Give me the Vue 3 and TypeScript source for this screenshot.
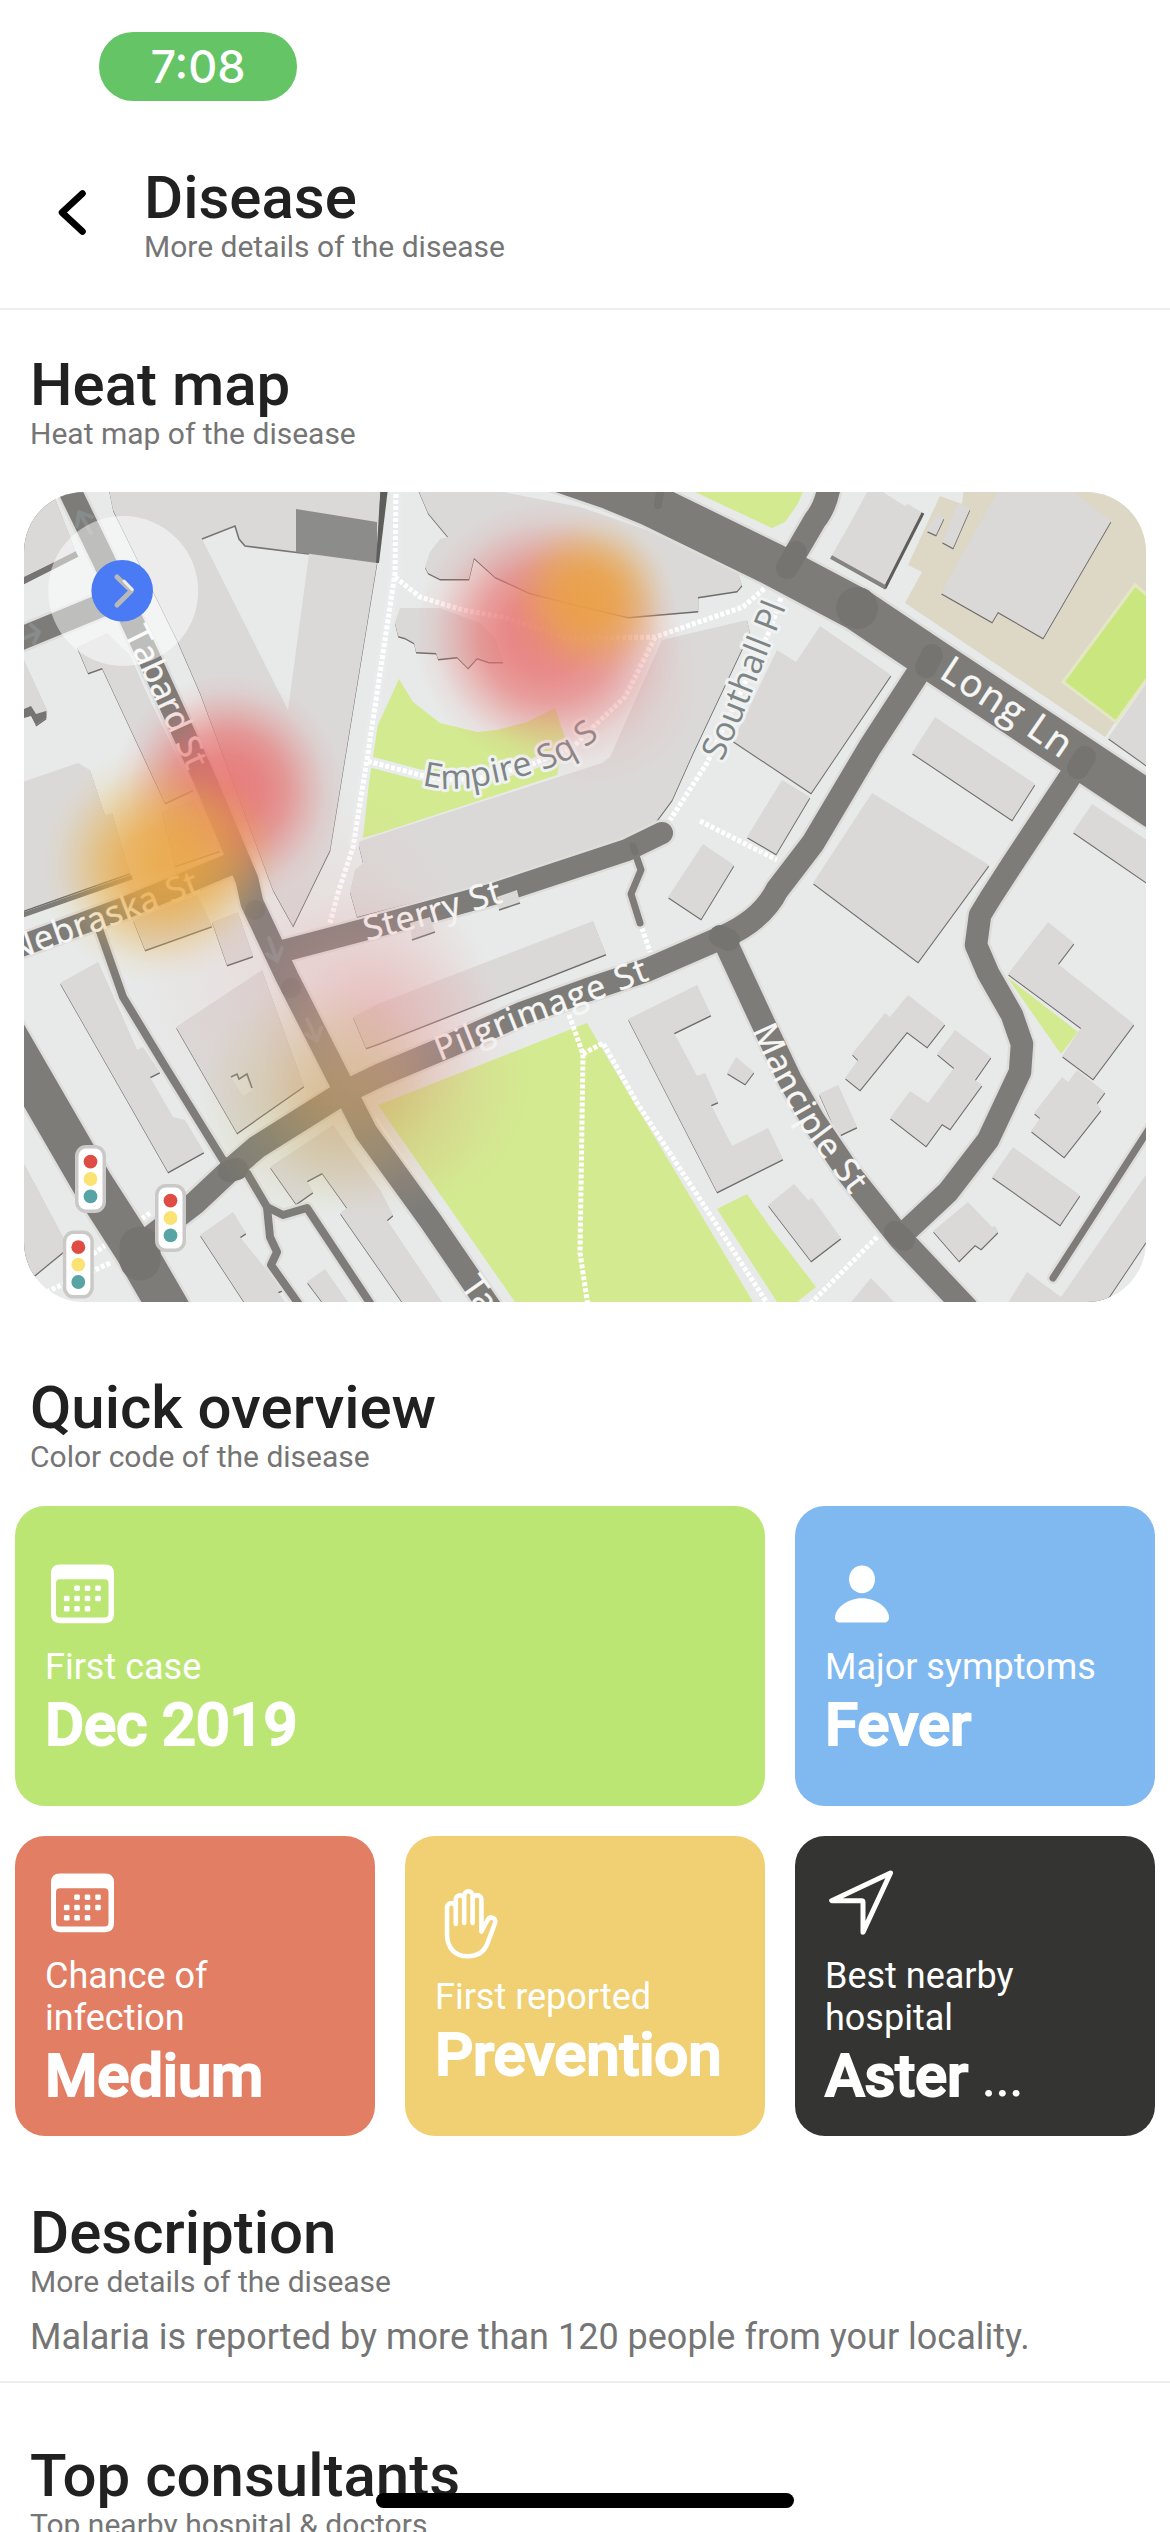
<script setup lang="ts">
type IconName = 'calendar' | 'person' | 'hand' | 'navigate'

interface Tile {
  icon: IconName
  label: string
  value: string
  more?: boolean
  color: string
  wide?: boolean
}

interface Road {
  d: string
  w: number
}

interface Label {
  id: string
  d: string
  text: string
  len: number
  size: number
  plain?: boolean
}

const tiles: Tile[] = [
  { icon: 'calendar', label: 'First case', value: 'Dec 2019', color: '#bbe673', wide: true },
  { icon: 'person', label: 'Major symptoms', value: 'Fever', color: '#7fb9f0' },
  { icon: 'calendar', label: 'Chance of infection', value: 'Medium', color: '#e27e64' },
  { icon: 'hand', label: 'First reported', value: 'Prevention', color: '#f0d072' },
  { icon: 'navigate', label: 'Best nearby hospital', value: 'Aster', more: true, color: '#343532' },
]

const calendarDots: number[][] = [
  [32, 36.2], [42.5, 36.2], [53, 36.2],
  [21.7, 46.5], [32, 46.5], [42.5, 46.5], [53, 46.5],
  [21.7, 56.8], [32, 56.8], [42.5, 56.8],
]

const parks: string[] = [
  '399,679 413,702 440,723 477,732 497,730 527,722 555,708 565,738 557,775 380,833 363,838 370,773 372,753 377,727',
  '587,1023 598,1042 753,1302 515,1302 378,1105',
  '747,1194 717,1209 777,1302 797,1302 816,1287 770,1227',
  '1007,977 1078,1032 1061,1054',
  '695,492 772,528 785,522 797,505 803,492',
]

const buildings: string[] = [
  '867,492 883,492 905,506 908,504 923,513 885,588 831,557 852,520',
  '998,492 1072,492 1111,521 1043,638 998,612 992,622 941,593 983,518',
  '937,513 944,518 936,535 927,531',
  '958,503 970,509 953,548 942,542',
  '820,626 891,675 811,793 733,741 777,650 796,662',
  '782,780 810,797 776,854 747,837',
  '935,717 1035,784 1012,820 912,753',
  '872,793 989,865 918,962 813,883',
  '1092,804 1150,842 1150,885 1073,832',
  '1150,678 1108,738 1150,768',
  '703,844 734,865 701,919 668,897',
  '662,640 747,620 750,632 693,753 672,800 652,827 620,843 513,877 357,917 350,892 355,870 363,863 358,842 400,828 602,763 610,757',
  '414,480 503,492 580,507 647,530 738,573 742,585 737,591 698,597 698,611 628,617 577,605 530,593 495,577 474,558 469,579 440,579 428,573 425,567 430,552 440,539 448,537 428,513',
  '400,608 440,608 480,623 495,638 503,662 489,662 477,658 468,668 457,657 438,659 436,653 416,652 414,643 405,638 398,636 395,623',
  '107,480 381,480 377,563 330,850 293,926 273,890 200,693 177,640 113,510',
  '20,480 48,480 76,552 24,577',
  '77,647 107,633 130,655 145,690 193,790 165,803 102,668 88,673',
  '20,783 78,763 90,770 105,815 112,813 130,873 20,912',
  '20,655 24,660 47,710 46,718 36,725 31,714 20,716',
  '162,812 193,800 222,850 175,866',
  '133,920 197,895 212,926 145,950',
  '212,922 238,912 253,956 227,965',
  '98,962 137,1050 143,1047 160,1072 150,1077 173,1117 185,1120 204,1152 168,1172 60,983',
  '262,970 304,1086 237,1133 176,1027',
  '333,1125 380,1190 393,1215 387,1220 442,1302 402,1302 340,1213 347,1208 322,1173 307,1181 313,1192 296,1204 270,1167',
  '233,1212 246,1233 240,1237 283,1290 278,1292 285,1302 244,1302 200,1235',
  '325,1269 348,1302 322,1302 307,1282',
  '20,1156 63,1237 63,1252 35,1275 20,1278',
  '353,1017 380,1003 593,921 606,954 380,1043 366,1048',
  '697,985 711,1015 674,1033 697,1076 705,1073 718,1102 711,1105 732,1146 768,1128 783,1159 717,1192 628,1019',
  '736,1057 754,1072 745,1084 727,1073',
  '794,1184 808,1200 812,1198 841,1238 811,1261 768,1205',
  '838,1085 857,1127 838,1136 819,1094',
  '908,995 945,1024 927,1047 907,1032 860,1090 845,1078 858,1060 852,1054 885,1013 890,1017',
  '955,1030 991,1057 975,1080 982,1085 950,1129 942,1124 926,1146 890,1118 910,1091 928,1103 954,1068 937,1054',
  '1048,922 1074,943 1058,964 1134,1024 1093,1079 1062,1056 1081,1028 1008,974',
  '1077,1070 1105,1092 1097,1103 1101,1110 1064,1157 1031,1131 1040,1118 1034,1113 1062,1077 1068,1082',
  '1013,1147 1080,1195 1060,1225 992,1177',
  '968,1202 992,1227 995,1226 998,1232 981,1249 975,1245 959,1261 933,1231',
  '1150,1169 1150,1236 1103,1306 1006,1306 1027,1272 1061,1297',
  '871,1278 898,1306 848,1306',
]

const roadBits: string[] = [
  '410,923 430,917 435,932 412,940',
  '497,897 517,890 520,903 499,910',
]

const roads: Road[] = [
  { d: 'M40 425L68 487L103 559L150 660L205 780L247 880L252 903L287 977L343 1087L366 1132L385 1158L430 1220L495 1315', w: 23 },
  { d: 'M10 643L112 601', w: 23 },
  { d: 'M10 950L127 907L238 861', w: 22 },
  { d: 'M0 1024L92 1183L135 1250L172 1314', w: 41 },
  { d: 'M143 1243L195 1203L228 1172L257 1147L343 1093L380 1075L447 1047L523 1013L587 990L647 970L723 937Q762 920 777 890L813 843L870 747L920 670L933 653', w: 23.5 },
  { d: 'M283 951L363 930L497 893L527 883L627 850L662 833', w: 22 },
  { d: 'M633 847L641 870L631 894L640 923', w: 7 },
  { d: 'M540 464L610 488L651 505L772 564L857 609L930 658L1040 731L1156 808', w: 43 },
  { d: 'M834 470L828 492Q824 509 815 520L787 568', w: 23 },
  { d: 'M1085 757L1070 777L1013 863L991 897L980 915L976 945L988 973L1012 1015L1022 1044L1020 1072L988 1140L948 1192L902 1235', w: 22.5 },
  { d: 'M723 937L763 1023L790 1080L813 1120L850 1175L900 1238L966 1308', w: 24 },
  { d: 'M1156 1118L1053 1278', w: 7 },
  { d: 'M97 923L123 997L163 1063L223 1160L247 1173L267 1207L283 1215L307 1208L376 1312', w: 8 },
  { d: 'M267 1207L270 1237L277 1252L271 1265L303 1310', w: 8 },
]

// Round overlaps where one street ends on top of another
const junctions: Road[] = [
  { d: 'M140 1247V1260', w: 41 },
  { d: 'M229 1171L237 1169', w: 22 },
  { d: 'M720 936L729 940', w: 22 },
  { d: 'M926 667L932 655', w: 22 },
  { d: 'M1078 768L1085 757', w: 22 },
  { d: 'M787 568L796 552', w: 22 },
  { d: 'M895 1232L904 1240', w: 22 },
  { d: 'M857 608h.1', w: 42 },
  { d: 'M660 492L658 505', w: 8 },
  { d: 'M255 910h.1', w: 20 },
  { d: 'M291 988h.1', w: 20 },
  { d: 'M633 846L635 852', w: 7 },
]

const footpaths: string[] = [
  'M396 488L395 573L367 760L353 847L338 893L330 923',
  'M395 577L420 597L463 610L507 618L565 638L607 638L655 637L743 607L765 588',
  'M655 637L625 697L593 727L573 747L530 765L480 778L447 780L420 775L367 761',
  'M781 598L770 630L707 763L670 820',
  'M700 821L777 860',
  'M642 928L650 952',
  'M569 1015L583 1054L580 1253L588 1306',
  'M583 1054L603 1043L637 1103L707 1210L769 1306',
  'M877 1237L808 1306',
  'M110 1263L44 1293',
  'M150 1213L93 1254',
]

const labels: Label[] = [
  { id: 'tabard', d: 'M124 633L129 643L196 789', text: 'Tabard St', len: 152, size: 34 },
  { id: 'nebraska', d: 'M13 961L110 927L222 884', text: 'Nebraska St', len: 200, size: 34 },
  { id: 'sterry', d: 'M367 941L435 923L520 897', text: 'Sterry St', len: 142, size: 34 },
  { id: 'pilgrimage', d: 'M440 1061L525 1027L665 974', text: 'Pilgrimage St', len: 225, size: 34 },
  { id: 'manciple', d: 'M752 1030L777 1085L805 1134L862 1210', text: 'Manciple St', len: 193, size: 34 },
  { id: 'long', d: 'M938 677L1000 717L1080 772', text: 'Long Ln', len: 148, size: 38 },
  { id: 'tabard-south', d: 'M460 1286L482 1317L532 1388', text: 'Tabard St', len: 140, size: 34 },
  { id: 'empire', d: 'M422 785Q452 793 490 784Q545 773 573 757L620 722', text: 'Empire Sq S', len: 190, size: 34, plain: true },
  { id: 'southall', d: 'M722 762L741 720L794 587', text: 'Southall Pl', len: 168, size: 34, plain: true },
]

const arrows: string[] = [
  'M91 533L80 513M77 526L79 512L92 517',
  'M22 639L39 632M31 625L39 632L34 643',
  'M269 938L277 960M267 954L277 961L282 948',
  'M307 1019L317 1041M306 1034L317 1041L321 1028',
]

const lights: number[][] = [
  [90.5, 1179],
  [170.5, 1218],
  [78.3, 1264.6],
]
</script>

<template>
  <main class="screen">
    <div class="status">
      <span class="clock">7:08</span>
    </div>

    <header class="topbar">
      <svg class="back" width="48" height="60" viewBox="48 182 48 60" aria-hidden="true">
        <path d="M82.5 193.5L62 212.5L82.5 231.5" />
      </svg>
      <div class="heading">
        <h1>Disease</h1>
        <p>More details of the disease</p>
      </div>
    </header>

    <section class="heading block first">
      <h2>Heat map</h2>
      <p>Heat map of the disease</p>
    </section>

    <div class="map">
      <svg width="1122" height="810" viewBox="24 492 1122 810">
        <defs>
          <radialGradient id="red">
            <stop offset="0" stop-color="#e8706e" stop-opacity=".88" />
            <stop offset=".3" stop-color="#e8706e" stop-opacity=".8" />
            <stop offset=".5" stop-color="#e8706e" stop-opacity=".62" />
            <stop offset=".7" stop-color="#e8706e" stop-opacity=".3" />
            <stop offset=".85" stop-color="#e8706e" stop-opacity=".09" />
            <stop offset="1" stop-color="#e8706e" stop-opacity="0" />
          </radialGradient>
          <radialGradient id="orange">
            <stop offset="0" stop-color="#eba540" stop-opacity=".86" />
            <stop offset=".3" stop-color="#eba640" stop-opacity=".76" />
            <stop offset=".5" stop-color="#eaab40" stop-opacity=".54" />
            <stop offset=".7" stop-color="#e9ae40" stop-opacity=".26" />
            <stop offset=".85" stop-color="#e9b040" stop-opacity=".08" />
            <stop offset="1" stop-color="#e9b040" stop-opacity="0" />
          </radialGradient>
          <radialGradient id="rose">
            <stop offset="0" stop-color="#e89090" stop-opacity=".36" />
            <stop offset=".5" stop-color="#e89c9c" stop-opacity=".2" />
            <stop offset="1" stop-color="#e8a0a0" stop-opacity="0" />
          </radialGradient>
          <radialGradient id="amber">
            <stop offset="0" stop-color="#cb9c4a" stop-opacity=".38" />
            <stop offset=".45" stop-color="#c4aa54" stop-opacity=".24" />
            <stop offset="1" stop-color="#c0b45e" stop-opacity="0" />
          </radialGradient>
          <path v-for="l in labels" :id="l.id" :key="l.id" :d="l.d" />
        </defs>

        <rect x="24" y="492" width="1122" height="810" fill="#e7eae9" />
        <polygon fill="#ddd7c6" points="965,480 1150,480 1150,670 1105,737 905,603 922,572 908,565 940,496 962,504" />
        <polygon v-for="(p, i) in parks" :key="'p' + i" :points="p" fill="#d3ea90" />
        <polygon fill="#c9e77e" stroke="#e4e7c4" stroke-width="3" points="1135,585 1152,599 1152,672 1116,722 1063,682" />

        <g fill="#6e6d6b" transform="translate(.2 1.4)">
          <polygon v-for="(p, i) in buildings" :key="'s' + i" :points="p" />
        </g>
        <g fill="#dbd9d8">
          <polygon v-for="(p, i) in buildings" :key="'b' + i" :points="p" />
        </g>

        <polygon fill="#e7eae9" points="202,539 235,526 239,539 245,546 309,554 288,710" />
        <path class="edge" d="M202 539L235 526L239 539L245 546L309 554" />
        <polygon fill="#8c8c8a" points="296,509 377,522 377,563 296,552" />
        <polygon fill="#5d5d5c" points="381,480 389,480 379,563 376,563" />
        <polygon fill="#e3e2e1" points="231,1077 245,1075 253,1090 243,1096" />
        <path class="edge" d="M231 1077L237 1074L239 1079L247 1074L252 1088" />
        <path d="M20 583L77 554" stroke="#757472" stroke-width="6" />
        <path d="M20 916L132 877" stroke="#7d7c79" stroke-width="5" />
        <path d="M24 709L31 706L36 714L46 711V718L36 725L31 716L24 718Z" fill="#757472" />
        <path d="M923 513L885 588" stroke="#5d5d5c" stroke-width="3" />
        <path d="M831 557L885 587" stroke="#858482" stroke-width="4" />

        <g fill="none" stroke="#e9ecec" stroke-width="11">
          <path d="M367 761L420 775L447 780L480 778L530 765L573 747L593 727" />
          <path d="M396 488L395 573L367 760L353 847" />
        </g>
        <g class="footpaths">
          <path v-for="(d, i) in footpaths" :key="'f' + i" :d="d" />
        </g>
        <path d="M376 1118L430 1200L480 1278" fill="none" stroke="#f3f2f1" stroke-width="2.5" />

        <g class="casing">
          <path v-for="(r, i) in roads" :key="'c' + i" :d="r.d" :stroke-width="r.w + 5" />
        </g>
        <g class="roads">
          <path v-for="(r, i) in roads" :key="'r' + i" :d="r.d" :stroke-width="r.w" />
        </g>
        <g class="junctions">
          <path v-for="(r, i) in junctions" :key="'j' + i" :d="r.d" :stroke-width="r.w" />
        </g>
        <g class="arrows">
          <path v-for="(d, i) in arrows" :key="'a' + i" :d="d" />
        </g>
        <g fill="#dbd9d8">
          <polygon v-for="(p, i) in roadBits" :key="'rb' + i" :points="p" />
        </g>
        <path class="edge" d="M412 940L435 932M499 910L520 903" />

        <text
          v-for="l in labels"
          :key="'t' + l.id"
          :class="['street', { plain: l.plain }]"
          :font-size="l.size"
        >
          <textPath :href="'#' + l.id" :textLength="l.len">{{ l.text }}</textPath>
        </text>

        <g>
          <circle cx="300" cy="960" r="180" fill="url(#rose)" opacity=".5" />
          <circle cx="375" cy="1010" r="125" fill="url(#rose)" />
          <circle cx="395" cy="1080" r="135" fill="url(#rose)" opacity=".75" />
          <circle cx="315" cy="1100" r="118" fill="url(#amber)" />
          <circle cx="375" cy="1110" r="110" fill="url(#amber)" opacity=".55" />
          <circle cx="228" cy="790" r="116" fill="url(#red)" />
          <circle cx="158" cy="865" r="118" fill="url(#orange)" />
          <circle cx="205" cy="855" r="85" fill="url(#orange)" opacity=".35" />
          <circle cx="547" cy="634" r="134" fill="url(#red)" />
          <circle cx="595" cy="680" r="110" fill="url(#rose)" opacity=".8" />
          <circle cx="590" cy="597" r="86" fill="url(#orange)" />
        </g>

        <g v-for="(l, i) in lights" :key="'l' + i" :transform="`translate(${l[0]} ${l[1]})`">
          <rect x="-15.5" y="-34" width="31" height="68" rx="11" fill="#cbc9c8" />
          <rect x="-12" y="-30.5" width="24" height="61" rx="7.5" fill="#fff" />
          <circle cy="-17.4" r="6.9" fill="#df4c43" />
          <circle r="6.9" fill="#fae273" />
          <circle cy="17.4" r="6.9" fill="#58a3a4" />
        </g>

        <circle cx="123.2" cy="591" r="75" fill="#fff" fill-opacity=".5" />
        <circle cx="122.2" cy="590.7" r="30.8" fill="#4a7af4" />
        <path d="M117 577L131.3 590.7L117 605" fill="none" stroke="#b9b9b8" stroke-width="5" stroke-linecap="round" stroke-linejoin="round" />
        <path d="M124 581L132.3 589.5" fill="none" stroke="#eee" stroke-width="3" stroke-linecap="round" />
      </svg>
    </div>

    <section class="heading block overview">
      <h2>Quick overview</h2>
      <p>Color code of the disease</p>
    </section>

    <div class="tiles">
      <article
        v-for="t in tiles"
        :key="t.label"
        :class="['tile', { wide: t.wide }]"
        :style="{ backgroundColor: t.color }"
      >
        <svg class="icon" width="75" height="94" viewBox="0 0 75 94" aria-hidden="true">
          <template v-if="t.icon === 'calendar'">
            <path
              fill="#fff"
              fill-rule="evenodd"
              d="M15 12.5H60Q69 12.5 69 21.5V62Q69 71.2 60 71.2H15Q6 71.2 6 62V21.5Q6 12.5 15 12.5ZM15 27.2Q11 27.2 11 31V61.5Q11 65.5 15 65.5H59.5Q63.5 65.5 63.5 61.5V31Q63.5 27.2 59.5 27.2Z"
            />
            <rect
              v-for="(c, i) in calendarDots"
              :key="i"
              :x="c[0] - 2.8"
              :y="c[1] - 2.8"
              width="5.6"
              height="5.6"
              rx="1.4"
              fill="#fff"
            />
          </template>
          <g v-else-if="t.icon === 'person'" fill="#fff">
            <path d="M37 13.5C44.5 13.5 50 19.5 50 27.5C50 35 44.3 41.2 37 41.2S24 35 24 27.5C24 19.5 29.5 13.5 37 13.5Z" />
            <path d="M37 46.2C52 46.2 64 56.5 64 65.5C64 69 62 70.5 59 70.5H15C12 70.5 10 69 10 65.5C10 56.5 22 46.2 37 46.2Z" />
          </g>
          <path
            v-else-if="t.icon === 'hand'"
            class="line hand"
            d="M20.8 42V25.5a4.4 4.4 0 0 0-8.8 0V52C12 66.5 20.5 74.2 32.7 74.2C43.5 74.2 50 69 53 60L60 41C61.8 36 55.3 33 52.3 38.5L46.4 49.5V17.5a4.4 4.4 0 0 0-8.8 0V41M20.8 26V17.5a4.2 4.2 0 0 1 8.4 0V41M29.2 18V13.5a4.2 4.2 0 0 1 8.4 0V18"
          />
          <path v-else class="line" d="M65.5 12L6.7 39.7H36.5a1.5 1.5 0 0 1 1.5 1.5V71.2Z" />
        </svg>
        <span class="label">{{ t.label }}</span>
        <strong class="value">{{ t.value }}<span v-if="t.more" class="more">&nbsp;...</span></strong>
      </article>
    </div>

    <section class="heading block description">
      <h2>Description</h2>
      <p>More details of the disease</p>
      <div class="body">Malaria is reported by more than 120 people from your locality.</div>
    </section>

    <section class="heading block consultants">
      <h2>Top consultants</h2>
      <p>Top nearby hospital &amp; doctors</p>
    </section>

    <div class="home-bar"></div>
  </main>
</template>

<style>
body {
  background: #fff;
  overflow: hidden;
}
</style>

<style scoped>
.screen {
  position: relative;
  box-sizing: border-box;
  width: 1170px;
  height: 2532px;
  overflow: hidden;
  background: #fff;
  font-family: Roboto, sans-serif;
  color: #212121;
}

.status {
  height: 101px;
  box-sizing: border-box;
  padding: 32px 0 0 99px;
}

.clock {
  display: flex;
  align-items: center;
  justify-content: center;
  width: 198px;
  height: 69px;
  border-radius: 34px;
  background: #65c466;
  color: #fff;
  font: 500 45px/69px Inter, sans-serif;
}

.topbar {
  display: flex;
  align-items: flex-start;
  box-sizing: border-box;
  height: 209px;
  padding: 65px 0 0 48px;
  border-bottom: 2px solid #eee;
}

.back {
  margin-top: 16px;
  margin-right: 48px;
  fill: none;
  stroke: #000;
  stroke-width: 6.6;
  stroke-linecap: round;
  stroke-linejoin: round;
}

h1,
h2,
p {
  margin: 0;
}

h1,
h2 {
  font-size: 60px;
  line-height: 64px;
  font-weight: 500;
  white-space: nowrap;
}

.heading p {
  font-size: 30px;
  line-height: 34px;
  color: #757575;
  white-space: nowrap;
}

.block {
  box-sizing: border-box;
  padding-left: 30px;
}

.first {
  height: 182px;
  padding-top: 43px;
}

.map {
  width: 1122px;
  height: 810px;
  margin: 0 24px;
  border-radius: 60px;
  overflow: hidden;
}

.map svg {
  display: block;
}

.footpaths {
  fill: none;
  stroke: #fff;
  stroke-width: 5;
  stroke-dasharray: 4 2;
}

.casing,
.roads,
.junctions,
.arrows {
  fill: none;
  stroke-linejoin: round;
  stroke-linecap: round;
}

.casing {
  stroke: #dedddc;
}

.roads {
  stroke: #7d7c79;
}

.junctions {
  stroke: #757470;
}

.arrows {
  stroke: #868c8b;
  stroke-width: 4;
}

.edge {
  fill: none;
  stroke: #777674;
  stroke-width: 1.6;
}

.street {
  fill: #f6f6f5;
  stroke: #f6f6f5;
  stroke-width: 0.5px;
  font-family: "Open Sans", "Noto Sans", sans-serif;
}

.street.plain {
  fill: #7d8586;
  stroke: #f0f2f2;
  stroke-width: 6px;
  stroke-linejoin: round;
  paint-order: stroke;
}

.overview {
  height: 204px;
  padding-top: 74px;
}

.tiles {
  display: grid;
  grid-template-columns: repeat(3, 360px);
  grid-auto-rows: 300px;
  gap: 30px;
  padding: 0 15px;
}

.tile {
  display: flex;
  flex-direction: column;
  justify-content: center;
  box-sizing: border-box;
  padding: 0 30px;
  border-radius: 30px;
  color: #fff;
}

.tile.wide {
  grid-column: span 2;
}

.icon {
  flex: none;
  display: block;
}

.line {
  fill: none;
  stroke: #fff;
  stroke-width: 5;
  stroke-linecap: round;
  stroke-linejoin: round;
}

.hand {
  stroke-width: 4.6;
}

.label {
  font-size: 36px;
  line-height: 42px;
}

.value {
  margin-top: 2px;
  margin-bottom: 1px;
  font-size: 60px;
  line-height: 70px;
  font-weight: 500;
  letter-spacing: -0.2px;
  -webkit-text-stroke: 2px #fff;
  white-space: nowrap;
}

.more {
  font-weight: 400;
  -webkit-text-stroke: 0;
  letter-spacing: -2px;
}

.description {
  height: 247px;
  padding-top: 65px;
  border-bottom: 2px solid #eee;
}

.body {
  margin-top: 17px;
  font-size: 36px;
  line-height: 42px;
  color: #757575;
}

.consultants {
  padding-top: 61px;
}

.home-bar {
  position: absolute;
  left: 376px;
  top: 2493px;
  width: 418px;
  height: 15px;
  border-radius: 8px;
  background: #000;
}
</style>
